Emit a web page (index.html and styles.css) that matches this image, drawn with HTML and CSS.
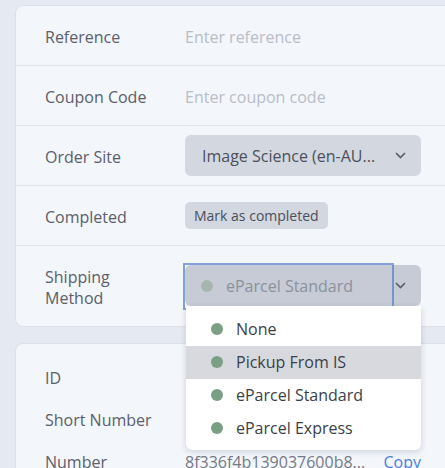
FILE: index.html
```html
<!DOCTYPE html>
<html>
<head>
<meta charset="utf-8">
<link rel="stylesheet" href="styles.css">
</head>
<body>
<div class="page">
  <section class="card">
    <div class="row">
      <div class="label">Reference</div>
      <div class="placeholder">Enter reference</div>
    </div>
    <div class="row">
      <div class="label">Coupon Code</div>
      <div class="placeholder">Enter coupon code</div>
    </div>
    <div class="row">
      <div class="label">Order Site</div>
      <div class="select">
        <span class="select-text">Image Science (en-AU...</span>
        <svg class="chev" width="11" height="7" viewBox="0 0 11 7"><path d="M1 1l4.5 4.5L10 1" fill="none" stroke="#5a5f6a" stroke-width="1.7"/></svg>
      </div>
    </div>
    <div class="row">
      <div class="label">Completed</div>
      <div><button class="btn">Mark as completed</button></div>
    </div>
    <div class="row row-last">
      <div class="label label-wrap">Shipping Method</div>
      <div class="ship">
        <div class="select select-dark">
          <div class="search">
            <span class="dot dot-dim"></span>
            <span class="search-text">eParcel Standard</span>
          </div>
          <svg class="chev" width="11" height="7" viewBox="0 0 11 7"><path d="M1 1l4.5 4.5L10 1" fill="none" stroke="#5a5f6a" stroke-width="1.7"/></svg>
        </div>
        <ul class="menu">
          <li class="item"><span class="dot"></span>None</li>
          <li class="item item-hover"><span class="dot"></span>Pickup From IS</li>
          <li class="item"><span class="dot"></span>eParcel Standard</li>
          <li class="item"><span class="dot"></span>eParcel Express</li>
        </ul>
      </div>
    </div>
  </section>
  <section class="card card-info">
    <div class="info-row">
      <div class="label">ID</div>
      <div class="value"></div>
    </div>
    <div class="info-row">
      <div class="label">Short Number</div>
      <div class="value"></div>
    </div>
    <div class="info-row">
      <div class="label">Number</div>
      <div class="value value-copy"><span class="mono">8f336f4b139037600b8...</span><a class="copy">Copy</a></div>
    </div>
  </section>
</div>
</body>
</html>
```
FILE: styles.css
```css
html, body {
  margin: 0;
  padding: 0;
}
body {
  background: #e5e9f2;
  font-family: "Open Sans", "Noto Sans", sans-serif;
  font-size: 16px;
  color: #5b606b;
  overflow: hidden;
  width: 445px;
  height: 468px;
}
.page {
  padding: 5px 0 0 15px;
  display: flex;
  flex-direction: column;
  gap: 16px;
  width: 520px;
}
.card {
  background: #f3f6fb;
  border: 1px solid #dce0e9;
  border-radius: 8px;
}
.row {
  display: grid;
  grid-template-columns: 140px 1fr;
  align-items: center;
  min-height: 60px;
  box-sizing: border-box;
  padding-left: 29px;
  border-bottom: 1px solid #dfe3ec;
}
.row-last {
  border-bottom: none;
  min-height: 80px;
  padding-top: 15px;
  padding-bottom: 17px;
}
.label {
  max-width: 115px;
  line-height: 21px;
  padding-top: 3px;
  color: #5b606b;
}
.label-wrap {
  padding-top: 6px;
}
.placeholder {
  color: #b9bdc6;
  line-height: 24px;
  padding-top: 3px;
}
.select {
  width: 236px;
  height: 41px;
  box-sizing: border-box;
  background: #d3d7e0;
  border-radius: 6px;
  display: flex;
  align-items: center;
  justify-content: space-between;
  padding: 0 15px 0 17px;
  position: relative;
}
.select-text {
  color: #4b505b;
  white-space: nowrap;
  padding-top: 1px;
}
.chev {
  display: block;
  flex: none;
}
.btn {
  font-family: "Open Sans", "Noto Sans", sans-serif;
  font-size: 14px;
  color: #4a4f5a;
  background: #d3d7e0;
  border: none;
  border-radius: 5px;
  height: 27px;
  padding: 0 9px;
  margin: 0;
  display: block;
}
.ship {
  position: relative;
  width: 236px;
}
.select-dark {
  background: #c6cbd5;
  justify-content: flex-end;
}
.search {
  position: absolute;
  left: -2px;
  top: -2px;
  width: 211px;
  height: 47px;
  box-sizing: border-box;
  border: 2px solid rgba(84, 126, 205, 0.7);
  display: flex;
  align-items: center;
  gap: 13px;
  padding-left: 16px;
}
.search-text {
  color: #8b919c;
}
.dot {
  width: 12px;
  height: 12px;
  border-radius: 50%;
  background: #7b9f85;
  flex: none;
}
.dot-dim {
  background: #a6b6ae;
}
.menu {
  position: absolute;
  left: 1px;
  top: 41px;
  width: 235px;
  margin: 0;
  padding: 7px 0 5px;
  list-style: none;
  background: #ffffff;
  border-radius: 0 0 6px 6px;
  box-shadow: 0 2px 6px rgba(40, 50, 70, 0.18);
  z-index: 2;
}
.item {
  height: 33px;
  display: flex;
  align-items: center;
  gap: 13px;
  padding-left: 25px;
  color: #3a3f49;
}
.item-hover {
  background: #d7d9de;
}
.card-info {
  padding-top: 13px;
}
.info-row {
  display: grid;
  grid-template-columns: 140px 236px;
  align-items: center;
  height: 42px;
  padding-left: 29px;
}
.info-row .label {
  padding-top: 0;
}
.value-copy {
  display: flex;
  justify-content: space-between;
  align-items: center;
}
.mono {
  color: #747a86;
  white-space: nowrap;
}
.copy {
  color: #4a7fe0;
}
```
